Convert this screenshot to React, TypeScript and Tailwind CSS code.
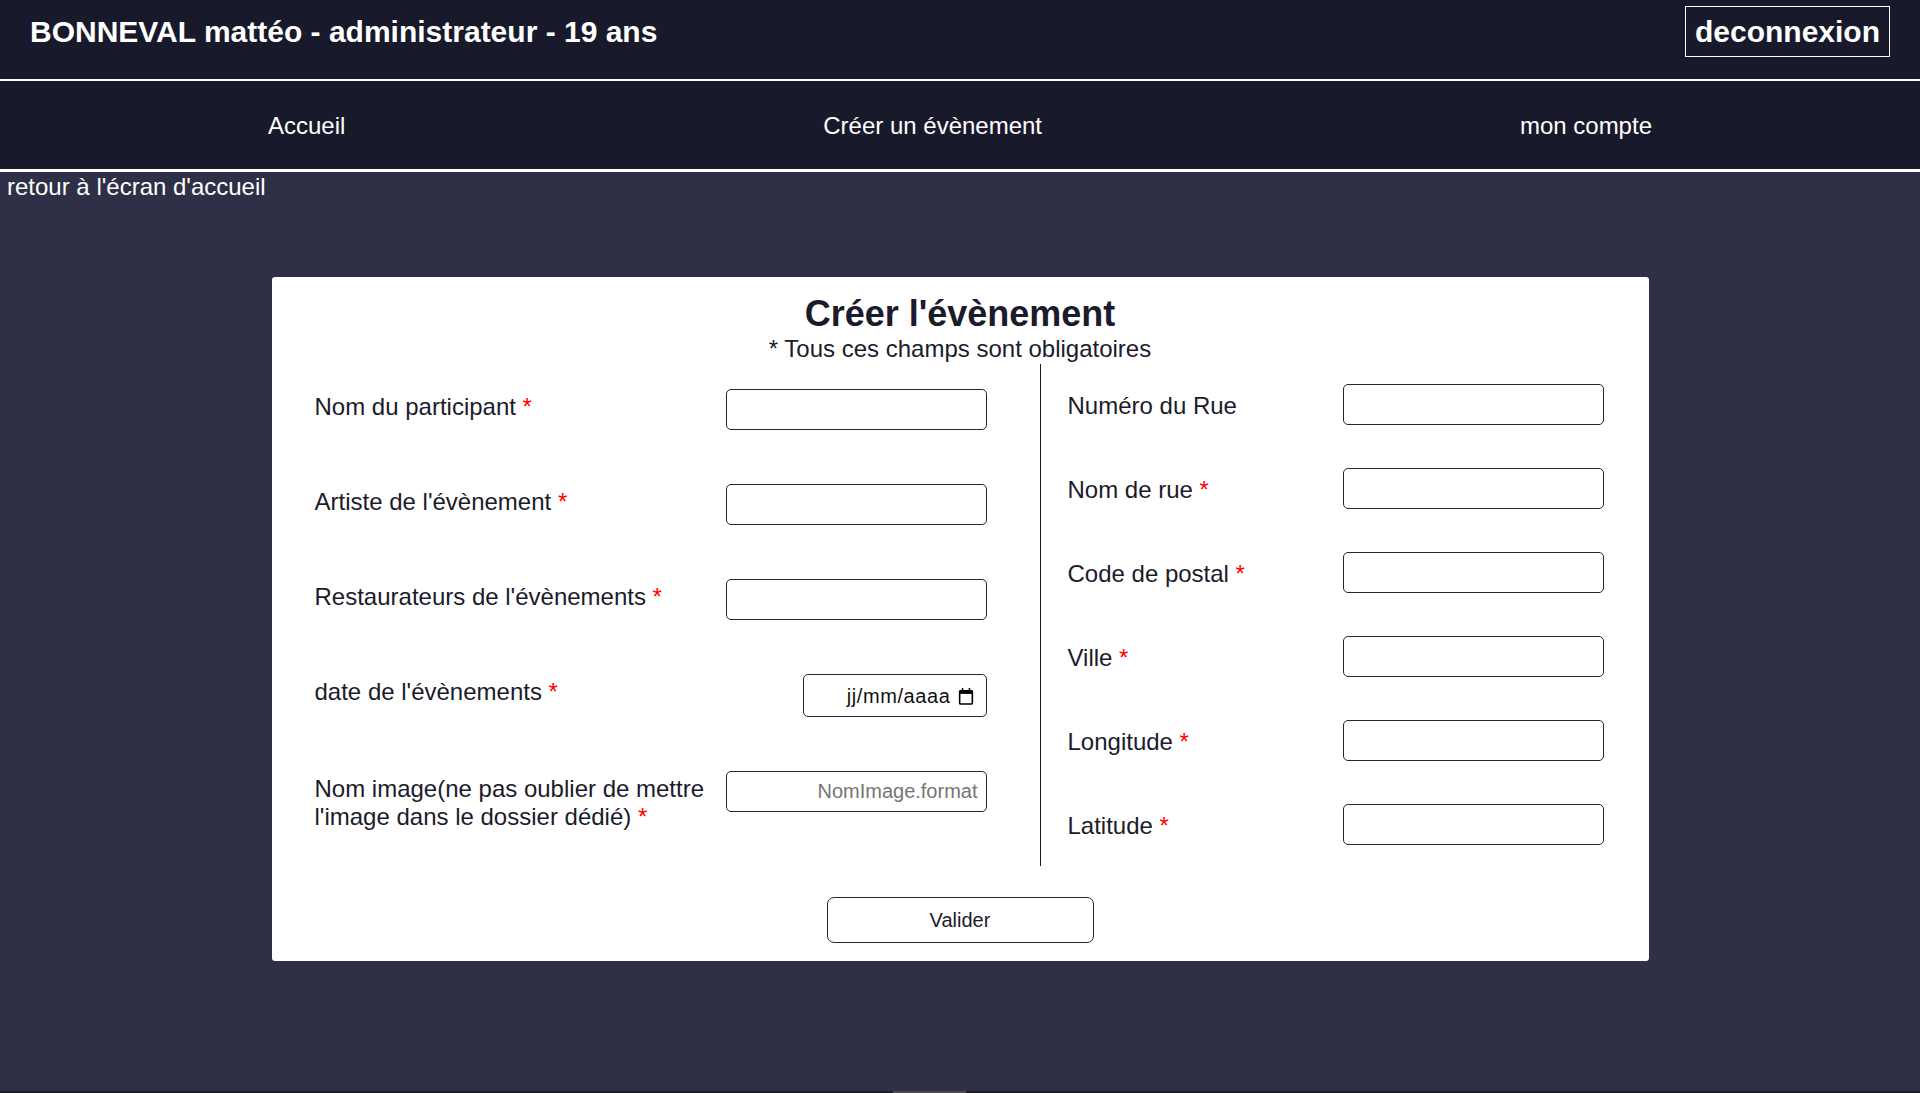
import React from "react";

const leftFields = [
  { label: "Nom du participant", kind: "text" },
  { label: "Artiste de l'évènement", kind: "text" },
  { label: "Restaurateurs de l'évènements", kind: "text" },
  { label: "date de l'évènements", kind: "date" },
  { label: "Nom image(ne pas oublier de mettre l'image dans le dossier dédié)", kind: "image" },
];

const rightFields = [
  { label: "Numéro du Rue", required: false },
  { label: "Nom de rue", required: true },
  { label: "Code de postal", required: true },
  { label: "Ville", required: true },
  { label: "Longitude", required: true },
  { label: "Latitude", required: true },
];

const Star = () => <span className="text-[#ff0000]">{"\u00a0*"}</span>;

const CalendarIcon = () => (
  <svg width="16" height="18" viewBox="0 0 15 17" fill="none">
    <rect x="1.5" y="3.5" width="12" height="12.5" rx="1" stroke="#000" strokeWidth="1.5" />
    <rect x="1.5" y="3" width="12" height="3.5" fill="#000" />
    <rect x="3.5" y="1" width="1.5" height="3" fill="#000" />
    <rect x="10" y="1" width="1.5" height="3" fill="#000" />
  </svg>
);

const TextBox = ({ placeholder }: { placeholder?: string }) => (
  <input
    type="text"
    placeholder={placeholder}
    className="w-[261px] h-[41px] shrink-0 rounded-[5px] border border-[#23233a] bg-white px-[8px] text-right text-[20px] text-[#1b1b2b] placeholder:text-[#757575] outline-none"
  />
);

export default function App() {
  return (
    <div className="min-h-screen bg-[#2e3047] font-['Liberation_Sans',Arial,sans-serif]">
      {/* Header */}
      <header className="h-[81px] bg-[#181a2b] border-b-2 border-white px-[30px] pt-[6px]">
        <div className="flex items-center justify-between h-[51px]">
          <h1 className="text-[30px] font-bold text-white leading-[34px]">
            BONNEVAL mattéo - administrateur - 19 ans
          </h1>
          <button className="h-[51px] border border-white px-[9px] text-[30px] font-bold text-white leading-[34px]">
            deconnexion
          </button>
        </div>
      </header>

      {/* Nav */}
      <nav className="h-[91px] bg-[#181a2b] border-b-[3px] border-white flex items-center justify-between px-[268px] pt-[2px] text-[24px] text-white">
        <a>Accueil</a>
        <a>Créer un évènement</a>
        <a>mon compte</a>
      </nav>

      <main className="pb-[130px]">
        <p className="mt-[1px] px-[7px] text-[24px] leading-[28px] text-white">retour à l'écran d'accueil</p>

        <div className="mx-auto mt-[76px] w-[1377px] rounded-[3px] bg-white pt-[16px] pb-[18px] text-[#1b1b2b]">
          <h2 className="text-center text-[36px] font-bold leading-[41px]">Créer l'évènement</h2>
          <p className="mt-[1px] text-center text-[24px] leading-[28px]">* Tous ces champs sont obligatoires</p>

          <div className="mt-[1px] flex h-[502px]">
            {/* Left column */}
            <div className="w-[768px] flex flex-col gap-[54px] pt-[25px] pl-[43px] pr-[53px]">
              {leftFields.map((f) => (
                <div key={f.label} className="flex items-start justify-between">
                  <label className="mt-[4px] w-[405px] text-[24px] leading-[28px]">
                    {f.label}
                    <Star />
                  </label>
                  {f.kind === "date" ? (
                    <div className="flex h-[43px] w-[184px] items-center justify-end gap-[7px] rounded-[5px] border border-[#23233a] pr-[12px] text-[20px] tracking-[0.6px] text-[#111]">
                      <span>jj/mm/aaaa</span>
                      <CalendarIcon />
                    </div>
                  ) : (
                    <TextBox placeholder={f.kind === "image" ? "NomImage.format" : undefined} />
                  )}
                </div>
              ))}
            </div>

            <div className="w-px bg-[#1b1b2b]" />

            {/* Right column */}
            <div className="flex-1 flex flex-col gap-[43px] pt-[20px] pl-[27px] pr-[45px]">
              {rightFields.map((f) => (
                <div key={f.label} className="flex items-center justify-between">
                  <label className="mt-[3px] text-[24px] leading-[28px]">
                    {f.label}
                    {f.required && <Star />}
                  </label>
                  <TextBox />
                </div>
              ))}
            </div>
          </div>

          <div className="mt-[31px] flex justify-center">
            <button className="h-[46px] w-[267px] rounded-[7px] border border-[#23233a] bg-white text-[20px] text-[#1b1b2b]">
              Valider
            </button>
          </div>
        </div>
      </main>

      <footer className="h-[40px] bg-[#1d1e22]">
        <div className="ml-[893px] h-[3px] w-[73px] bg-[#4d4d4d]" />
      </footer>
    </div>
  );
}
